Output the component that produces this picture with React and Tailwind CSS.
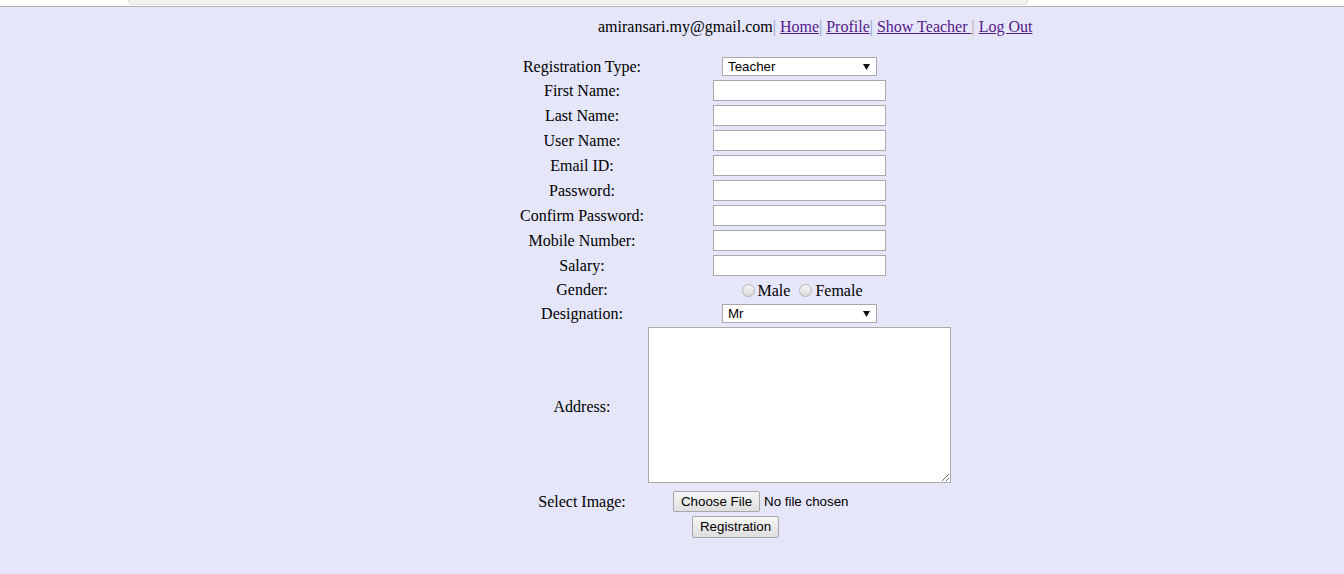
import { useState } from "react";

const serif = "font-['Liberation_Serif',serif]";
const sans = "font-['Liberation_Sans',Arial,sans-serif]";

function Select({ value, options, onChange }) {
  return (
    <div className="relative w-[155px] h-[19px]">
      <select
        value={value}
        onChange={(e) => onChange(e.target.value)}
        className={`${sans} block appearance-none w-full h-full bg-white border border-[#a9a9a9] pl-[5px] text-[13.33px] leading-[17px] text-black outline-none`}
      >
        {options.map((o) => (
          <option key={o}>{o}</option>
        ))}
      </select>
      {/* dropdown arrow */}
      <svg className="absolute right-[7px] top-[7px] pointer-events-none" width="7" height="6" viewBox="0 0 7 6">
        <path d="M0 0H7L3.5 6Z" fill="#111" />
      </svg>
    </div>
  );
}

function Radio({ checked, onClick }) {
  return (
    <span
      onClick={onClick}
      className="ml-[5px] mr-[3px] w-[13px] h-[13px] rounded-full border border-[#b5b5b5] bg-linear-to-b from-[#f6f6f6] to-[#d9d9d9] flex items-center justify-center cursor-pointer"
    >
      {checked && <span className="w-[5px] h-[5px] rounded-full bg-[#333]" />}
    </span>
  );
}

function Row({ label, h, children, className = "", labelClass = "" }) {
  return (
    <div className={`flex items-center ${className}`} style={{ height: h }}>
      <div className={`${serif} w-[130px] pr-[2px] text-center text-[16px] leading-[18px] text-black ${labelClass}`}>{label}</div>
      <div className="w-[303px] flex justify-center items-center">{children}</div>
    </div>
  );
}

const textFields = ["First Name:", "Last Name:", "User Name:", "Email ID:", "Password:", "Confirm Password:", "Mobile Number:", "Salary:"];

export default function App() {
  const [regType, setRegType] = useState("Teacher");
  const [designation, setDesignation] = useState("Mr");
  const [gender, setGender] = useState("");
  const [values, setValues] = useState({});

  return (
    <div className="w-full min-h-[574px] bg-[#e6e6fa]">
      {/* browser strip */}
      <div className="h-[6px] bg-white pl-[128px]">
        <div className="h-[5px] w-[900px] bg-[#f2f2f2] border-x border-b border-[#e2e2e2] rounded-b-[4px]" />
      </div>
      <div className="h-px bg-[#b3b3b3]" />

      {/* top links */}
      <div className={`${serif} pt-[11px] pl-[598px] text-[16px] leading-[18px] text-black whitespace-pre`}>
        amiransari.my@gmail.com<span className="text-[#7b9bd1]">|</span>{" "}
        <a href="#" className="text-[#551a8b] underline">Home</a>
        <span className="text-[#7b9bd1]">|</span>{" "}
        <a href="#" className="text-[#551a8b] underline">Profile</a>
        <span className="text-[#7b9bd1]">|</span>{" "}
        <a href="#" className="text-[#551a8b] underline">Show Teacher </a>
        <span className="text-[#c99a8a]">|</span>{" "}
        <a href="#" className="text-[#551a8b] underline">Log Out</a>
      </div>

      {/* registration form */}
      <div className="ml-[518px] mt-[21px] w-[434px] flex flex-col gap-[4px]">
        <Row label="Registration Type:" h={19}>
          <Select value={regType} options={["Teacher", "Student"]} onChange={setRegType} />
        </Row>

        {textFields.map((f) => (
          <Row key={f} label={f} h={21}>
            <input
              type={f.includes("Password") ? "password" : "text"}
              value={values[f] || ""}
              onChange={(e) => setValues({ ...values, [f]: e.target.value })}
              className={`${sans} block w-[173px] h-[21px] bg-white border border-[#a9a9a9] px-[2px] text-[13.33px] outline-none`}
            />
          </Row>
        ))}

        <Row label="Gender:" h={20}>
          <div className={`${serif} flex items-center text-[16px] leading-[18px] text-black pt-[1px]`}>
            <Radio checked={gender === "Male"} onClick={() => setGender("Male")} />
            <span>Male</span>
            <span className="w-[4px]" />
            <Radio checked={gender === "Female"} onClick={() => setGender("Female")} />
            <span>Female</span>
          </div>
        </Row>

        <Row label="Designation:" h={19}>
          <Select value={designation} options={["Mr", "Mrs", "Ms", "Dr"]} onChange={setDesignation} />
        </Row>

        <Row label="Address:" h={156} labelClass="pt-[4px]">
          <textarea className="block w-[303px] h-[156px] bg-white border border-[#a9a9a9] resize outline-none" />
        </Row>

        <Row label="Select Image:" h={21} className="mt-[4px]">
          <div className={`${sans} w-[253px] flex items-center text-[13.33px] text-black`}>
            <button className="w-[87px] h-[21px] border border-[#a6a6a6] rounded-[2px] bg-linear-to-b from-[#f6f6f6] to-[#dedede] leading-[19px]">
              Choose File
            </button>
            <span className="ml-[4px]">No file chosen</span>
          </div>
        </Row>

        <div className="flex justify-center pl-[1px]">
          <button className={`${sans} w-[87px] h-[22px] border border-[#a6a6a6] rounded-[2px] bg-linear-to-b from-[#f6f6f6] to-[#dedede] text-[13.33px] leading-[20px] text-black`}>
            Registration
          </button>
        </div>
      </div>
    </div>
  );
}
